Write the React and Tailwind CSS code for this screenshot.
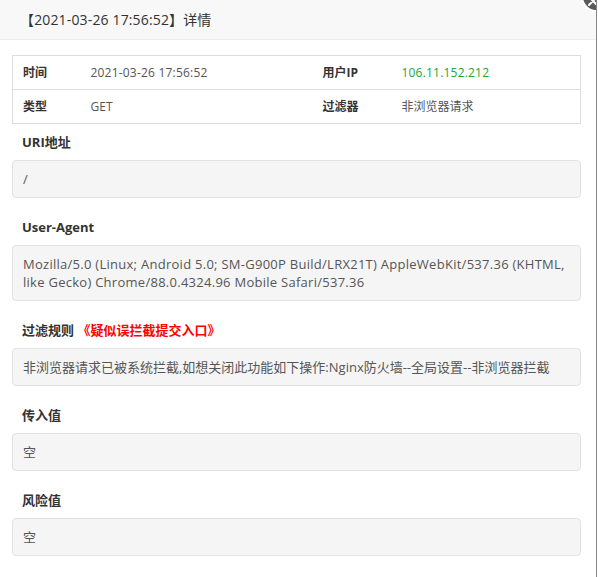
const font = { fontFamily: '"Open Sans", "Noto Sans CJK SC", sans-serif' }

const Field = ({ label, children, wide }) => (
  <div>
    <div className="h-[36px] leading-[36px] pl-[10px] text-[13px] font-bold text-[#333]">{label}</div>
    <div
      className={`mb-[11px] min-h-[38px] px-[10px] py-[9px] leading-[18px] text-[13px] text-[#555] bg-[#f5f5f5] border border-[#e2e2e2] rounded-[4px] break-words ${
        wide ? 'tracking-[0.27px]' : ''
      }`}
    >
      {children}
    </div>
  </div>
)

export default function App() {
  return (
    <div className="relative w-[597px] h-[577px] overflow-hidden bg-white border-r border-[#888]" style={font}>
      {/* header */}
      <div className="h-[40px] bg-[#f8f8f8] border-b border-[#eee] pl-[20px] flex items-center text-[14px] tracking-[0.15px] text-[#333]">
        【2021-03-26 17:56:52】详情
      </div>

      {/* close */}
      <div className="absolute left-[581px] top-[-19px] w-[31px] h-[31px] rounded-full bg-[#5b5b5b] border-2 border-white">
        <svg className="absolute left-[4px] top-[12px]" width="12" height="12" viewBox="0 0 12 12">
          <path d="M2 2 L10 10 M10 2 L2 10" stroke="#fff" strokeWidth="2" strokeLinecap="round" />
        </svg>
      </div>

      <div className="pl-[12px] pr-[15px] pt-[15px]">
        <table className="w-full border-collapse border border-[#ddd] text-[12px] text-[#555]">
          <tbody>
            <tr className="h-[34px] border-b border-[#ddd]">
              <td className="w-[78px] pl-[10px] font-bold text-[#333]">时间</td>
              <td className="w-[222px] tracking-[0.2px]">2021-03-26 17:56:52</td>
              <td className="w-[89px] pl-[10px] font-bold text-[#333]">用户IP</td>
              <td className="text-[#20a53a] tracking-[0.2px]">106.11.152.212</td>
            </tr>
            <tr className="h-[34px]">
              <td className="pl-[10px] font-bold text-[#333]">类型</td>
              <td>GET</td>
              <td className="pl-[10px] font-bold text-[#333]">过滤器</td>
              <td>非浏览器请求</td>
            </tr>
          </tbody>
        </table>

        <Field label="URI地址">/</Field>
        <Field label="User-Agent" wide>
          Mozilla/5.0 (Linux; Android 5.0; SM-G900P Build/LRX21T) AppleWebKit/537.36 (KHTML, like Gecko) Chrome/88.0.4324.96 Mobile Safari/537.36
        </Field>
        <Field
          label={
            <>
              过滤规则 <span className="text-[#f00]">《疑似误拦截提交入口》</span>
            </>
          }
        >
          非浏览器请求已被系统拦截,如想关闭此功能如下操作:Nginx防火墙--全局设置--非浏览器拦截
        </Field>
        <Field label="传入值">空</Field>
        <Field label="风险值">空</Field>
      </div>
    </div>
  )
}
